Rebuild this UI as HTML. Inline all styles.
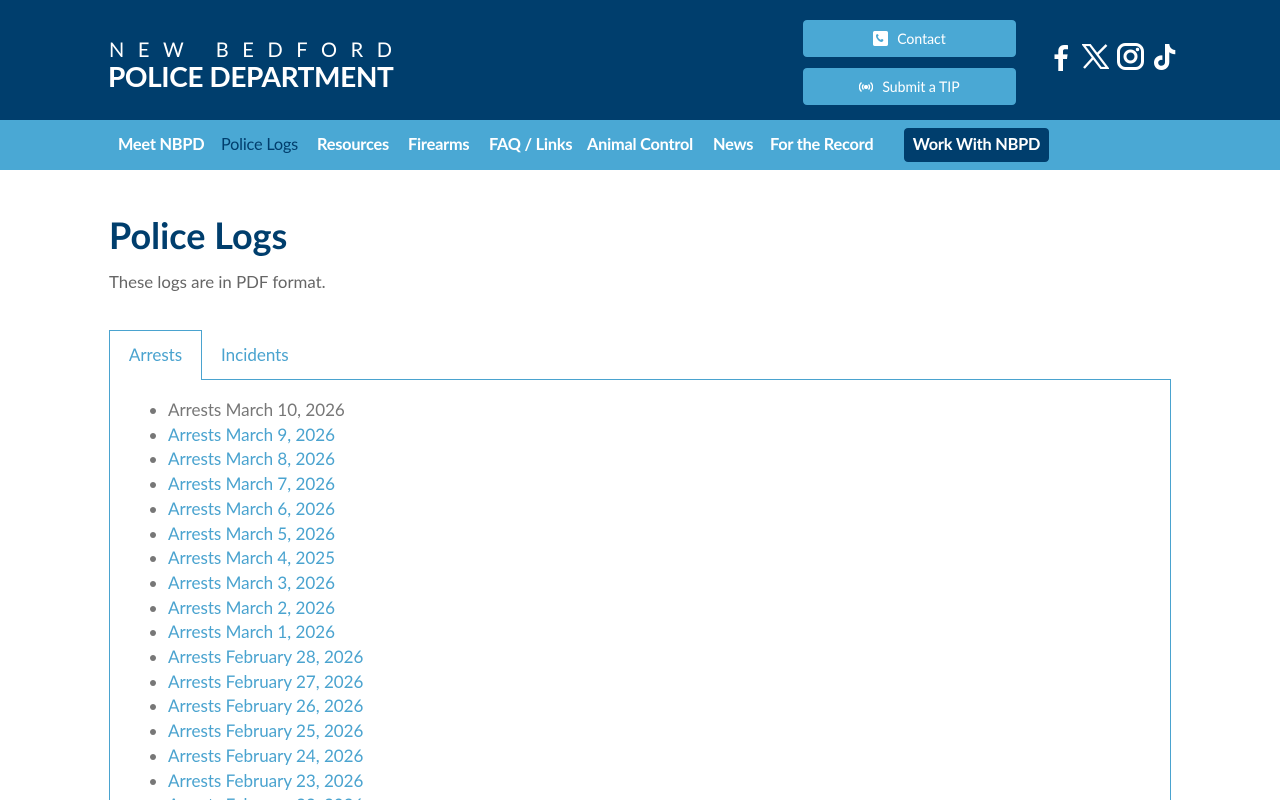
<!DOCTYPE html>
<html><head><meta charset="utf-8"><style>
*{margin:0;padding:0;box-sizing:border-box}
html{width:1280px;height:800px;overflow:hidden}
body{width:1280px;height:800px;overflow:hidden;font-family:"Lato","Liberation Sans",sans-serif;background:#fff;position:relative}
.hdr{position:absolute;left:0;top:0;width:1280px;height:120px;background:#003e6d}
.l1{position:absolute;left:109px;top:38px;color:#fff;font-size:20px;letter-spacing:13.6px;white-space:nowrap}
.l2{position:absolute;left:108px;top:59px;color:#fff;font-size:28px;font-weight:bold;letter-spacing:-0.4px;white-space:nowrap}
.btn{position:absolute;left:803px;width:213px;height:37px;background:#4aa8d4;border-radius:4px;color:#fff;font-size:14px;display:flex;align-items:center;justify-content:center;gap:9px}
.nav{position:absolute;left:0;top:120px;width:1280px;height:50px;background:#4aa8d4}
.nav span{position:absolute;top:15px;color:#fff;font-size:16.3px;font-weight:bold;letter-spacing:-0.2px;white-space:nowrap}
.work{position:absolute;left:904px;top:128px;width:145px;height:34px;background:#003e6d;border-radius:4px;color:#fff;font-size:16.3px;font-weight:bold;letter-spacing:-0.2px;text-align:center;line-height:34px}
h1{position:absolute;left:109px;top:213px;color:#003e6d;font-size:36px;font-weight:bold}
.sub{position:absolute;left:109px;top:271px;color:#666;font-size:16.8px}
.panel{position:absolute;left:109px;top:379px;width:1062px;height:430px;border:1px solid #4aa3cf}
.tab{position:absolute;left:109px;top:330px;width:93px;height:50px;border:1px solid #4aa3cf;border-bottom:none;background:#fff;color:#4aa3cf;font-size:17px;text-align:center;line-height:48px}
.tab2{position:absolute;left:221px;top:344px;color:#4aa3cf;font-size:17px}
ul{position:absolute;left:168px;top:398px;list-style:disc;color:#777;font-size:17px;line-height:24.7px}
ul li{white-space:nowrap}
ul li a{color:#4aa3cf;text-decoration:none}
</style></head><body>
<div class="hdr"></div>
<div class="l1">NEW BEDFORD</div>
<div class="l2">POLICE DEPARTMENT</div>
<div class="btn" style="top:20px"><svg width="15" height="15" viewBox="0 0 16 16"><rect width="16" height="16" rx="2" fill="#fff"/><path d="M4 3.5c1-.5 1.5 0 2 1.5l-1 1c.6 1.6 1.8 2.8 3.4 3.4l1-1c1.5.5 2 1 1.5 2-.5 1-1.5 1.5-2.5 1.2C6 10.5 5.5 10 3.6 7 3 5.5 3 4.2 4 3.5z" fill="#4aa8d4"/></svg>Contact</div>
<div class="btn" style="top:68px"><svg width="14" height="12" viewBox="0 0 14 12" fill="none" stroke="#fff" stroke-width="1.4"><circle cx="7" cy="6" r="1.3" fill="#fff"/><path d="M4.5 3.5a3.5 3.5 0 0 0 0 5M9.5 3.5a3.5 3.5 0 0 1 0 5M2.5 1.5a6 6 0 0 0 0 9M11.5 1.5a6 6 0 0 1 0 9"/></svg>Submit a TIP</div>
<svg style="position:absolute;left:1050px;top:43px" width="20" height="28" viewBox="0 0 20 28"><path d="M13 28V16h4l.6-4.6H13V8.5c0-1.3.4-2.2 2.3-2.2H18V2.2C17.5 2.1 16 2 14.3 2 10.7 2 8.3 4.2 8.3 8.2v3.2H4.5V16h3.8v12z" fill="#fff"/></svg>
<svg style="position:absolute;left:1082px;top:44px" width="27" height="25" viewBox="0 0 27 25"><path d="M1.5 1h6.5l17.5 23h-6.5z" fill="none" stroke="#fff" stroke-width="2.2"/><path d="M2 24L11.5 13.5M15.5 10L24.5 1" stroke="#fff" stroke-width="2.4"/></svg>
<svg style="position:absolute;left:1117px;top:43px" width="27" height="27" viewBox="0 0 27 27"><rect x="1.5" y="1.5" width="24" height="24" rx="7" fill="none" stroke="#fff" stroke-width="3"/><circle cx="13.5" cy="13.5" r="5.5" fill="none" stroke="#fff" stroke-width="3"/><circle cx="20.5" cy="6.5" r="1.7" fill="#fff"/></svg>
<svg style="position:absolute;left:1153px;top:43px" width="25" height="28" viewBox="0 0 25 28"><path d="M12 1h4.3c.3 3.5 2.5 5.8 6 6v4.3c-2.3 0-4.3-.8-6-2V19c0 4.8-3.5 8-7.8 8C4.3 27 1 24 1 19.6c0-4.4 3.8-7.8 8.4-7.2v4.6c-2.2-.7-4.2.8-4.2 2.7 0 1.7 1.3 3 3 3 1.8 0 3.8-1 3.8-3.6z" fill="#fff"/></svg>
<div class="nav">
<span style="left:118px">Meet NBPD</span>
<span style="left:221px;color:#003e6d;font-weight:normal">Police Logs</span>
<span style="left:317px">Resources</span>
<span style="left:408px">Firearms</span>
<span style="left:489px">FAQ / Links</span>
<span style="left:587px">Animal Control</span>
<span style="left:713px">News</span>
<span style="left:770px">For the Record</span>
</div>
<div class="work">Work With NBPD</div>
<h1>Police Logs</h1>
<div class="sub">These logs are in PDF format.</div>
<div class="panel"></div>
<div class="tab">Arrests</div>
<div class="tab2">Incidents</div>
<ul>
<li>Arrests March 10, 2026</li>
<li><a>Arrests March 9, 2026</a></li>
<li><a>Arrests March 8, 2026</a></li>
<li><a>Arrests March 7, 2026</a></li>
<li><a>Arrests March 6, 2026</a></li>
<li><a>Arrests March 5, 2026</a></li>
<li><a>Arrests March 4, 2025</a></li>
<li><a>Arrests March 3, 2026</a></li>
<li><a>Arrests March 2, 2026</a></li>
<li><a>Arrests March 1, 2026</a></li>
<li><a>Arrests February 28, 2026</a></li>
<li><a>Arrests February 27, 2026</a></li>
<li><a>Arrests February 26, 2026</a></li>
<li><a>Arrests February 25, 2026</a></li>
<li><a>Arrests February 24, 2026</a></li>
<li><a>Arrests February 23, 2026</a></li>
<li><a>Arrests February 22, 2026</a></li>
</ul>
</body></html>
